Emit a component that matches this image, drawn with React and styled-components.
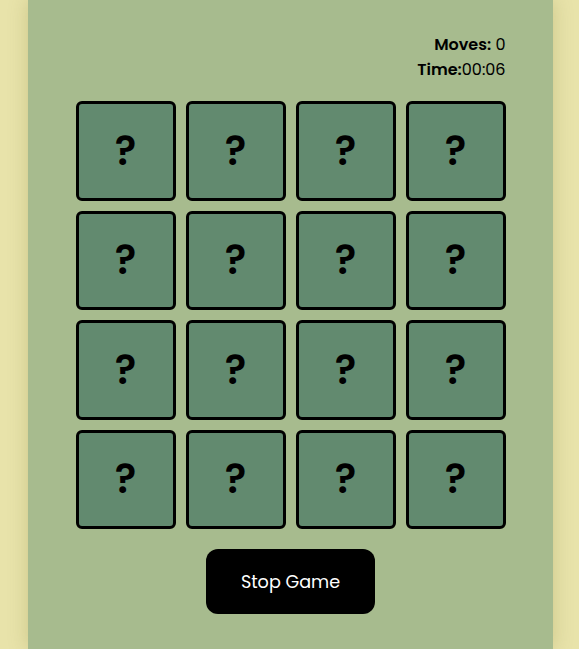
import React, { useState, useEffect } from 'react'
import styled, { createGlobalStyle } from 'styled-components'

const GlobalStyle = createGlobalStyle`
    html, body {
        margin: 0;
        padding: 0;
        height: 100%;
    }
    body {
        background: #e8e3aa;
        font-family: "Poppins", Inter, "Noto Sans", sans-serif;
    }
    #root {
        height: 100%;
    }
`

const Page = styled.div`
    display: flex;
    justify-content: center;
    min-height: 100%;
`

const Board = styled.main`
    width: 525px;
    margin-left: 2px;
    background: #a7bb8e;
    box-shadow: 0 0 18px rgba(120, 110, 40, 0.25);
    display: flex;
    flex-direction: column;
    align-items: center;
    padding-top: 32px;
    box-sizing: border-box;
`

const Stats = styled.div`
    width: 430px;
    text-align: right;
    font-size: 16px;
    line-height: 25px;
    color: #000;
    margin-bottom: 19px;
`

const Label = styled.span`
    font-weight: 600;
`

const Grid = styled.div`
    display: grid;
    grid-template-columns: repeat(4, 100px);
    grid-auto-rows: 99.5px;
    gap: 10px 10px;
`

const Card = styled.button`
    box-sizing: border-box;
    width: 100px;
    height: 100%;
    border: 3.5px solid #000;
    border-radius: 6px;
    background: #628a6f;
    display: flex;
    align-items: center;
    justify-content: center;
    font-family: inherit;
    font-size: 40px;
    font-weight: 600;
    color: #000;
    padding: 0;
    cursor: pointer;
`

const StopButton = styled.button`
    margin-top: 20px;
    width: 169px;
    height: 65px;
    border: none;
    border-radius: 12px;
    background: #000;
    color: #fff;
    font-family: inherit;
    font-size: 17.6px;
    cursor: pointer;
`

export default function App() {
    const [moves] = useState(0)
    const [seconds, setSeconds] = useState(6)
    const cards = Array.from({ length: 16 }, (_, i) => i)

    useEffect(() => {
        // frozen at 00:06 for the screenshot
        setSeconds(6)
    }, [])

    const time = `${String(Math.floor(seconds / 60)).padStart(2, '0')}:${String(seconds % 60).padStart(2, '0')}`

    return (
        <Page>
            <GlobalStyle />
            <Board>
                <Stats>
                    <div><Label>Moves:</Label> {moves}</div>
                    <div><Label>Time:</Label>{time}</div>
                </Stats>
                <Grid>
                    {cards.map(i => (
                        <Card key={i}>?</Card>
                    ))}
                </Grid>
                <StopButton>Stop Game</StopButton>
            </Board>
        </Page>
    )
}
